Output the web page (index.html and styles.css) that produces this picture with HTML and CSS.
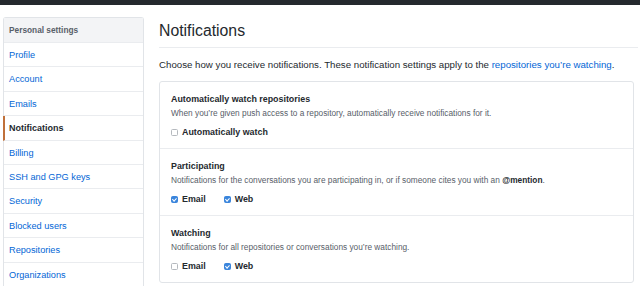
FILE: index.html
```html
<!DOCTYPE html>
<html lang="en">
<head>
<meta charset="UTF-8">
<title>Notification settings</title>
<link rel="stylesheet" href="styles.css">
</head>
<body>
<div class="topbar"></div>

<div class="layout">

  <nav class="menu">
    <div class="menu-heading">Personal settings</div>
    <a class="menu-item" href="#">Profile</a>
    <a class="menu-item" href="#">Account</a>
    <a class="menu-item" href="#">Emails</a>
    <a class="menu-item selected" href="#">Notifications</a>
    <a class="menu-item" href="#">Billing</a>
    <a class="menu-item" href="#">SSH and GPG keys</a>
    <a class="menu-item" href="#">Security</a>
    <a class="menu-item" href="#">Blocked users</a>
    <a class="menu-item" href="#">Repositories</a>
    <a class="menu-item" href="#">Organizations</a>
  </nav>

  <main class="content">
    <h2 class="subhead">Notifications</h2>
    <p class="lead">Choose how you receive notifications. These notification settings apply to the <a href="#">repositories you’re watching</a>.</p>

    <div class="box">
      <div class="box-row">
        <h3>Automatically watch repositories</h3>
        <p class="note">When you’re given push access to a repository, automatically receive notifications for it.</p>
        <div class="checks">
          <label class="check"><span class="box-check"></span>Automatically watch</label>
        </div>
      </div>

      <div class="box-row">
        <h3>Participating</h3>
        <p class="note">Notifications for the conversations you are participating in, or if someone cites you with an <strong>@mention</strong>.</p>
        <div class="checks">
          <label class="check"><span class="box-check on"></span>Email</label>
          <label class="check"><span class="box-check on"></span>Web</label>
        </div>
      </div>

      <div class="box-row">
        <h3>Watching</h3>
        <p class="note">Notifications for all repositories or conversations you’re watching.</p>
        <div class="checks">
          <label class="check"><span class="box-check"></span>Email</label>
          <label class="check"><span class="box-check on"></span>Web</label>
        </div>
      </div>
    </div>
  </main>

</div>
</body>
</html>
```

FILE: styles.css
```css
:root {
  --dark: #24292e;
  --border: #e1e4e8;
  --border-soft: #eaecef;
  --link: #0366d6;
  --text: #24292e;
  --muted: #586069;
  --head-bg: #f3f4f6;
  --accent: #c0703a;
  --check: #3a85dc;
}

* { margin: 0; padding: 0; box-sizing: border-box; }

body {
  background: #fff;
  color: var(--text);
  font-family: 'Liberation Sans', Arial, sans-serif;
  font-size: 9.5px;
  overflow: hidden;
}

a { color: var(--link); text-decoration: none; }

.topbar {
  height: 5px;
  background: var(--dark);
}

.layout {
  display: flex;
  align-items: flex-start;
  padding: 12px 0 0 3px;
}

/* Sidebar */
.menu {
  width: 141px;
  flex-shrink: 0;
  border: 1px solid var(--border);
  border-bottom: 0;
  border-radius: 3px 3px 0 0;
}

.menu-heading {
  height: 25px;
  line-height: 24px;
  padding: 0 5px;
  background: var(--head-bg);
  border-bottom: 1px solid var(--border-soft);
  color: var(--muted);
  font-size: 8.3px;
  font-weight: bold;
}

.menu-item {
  display: block;
  height: 24.4px;
  line-height: 24px;
  padding: 0 5px;
  border-bottom: 1px solid var(--border-soft);
  font-size: 9.2px;
}

.menu-item.selected {
  color: var(--text);
  font-weight: bold;
  font-size: 9px;
  margin-left: -1px;
  border-left: 2px solid var(--accent);
  padding-left: 4px;
}

/* Main */
.content {
  flex: 1;
  margin-left: 15px;
  margin-right: 2px;
}

.subhead {
  font-size: 15.8px;
  font-weight: normal;
  line-height: 26px;
  padding-top: 1px;
  padding-bottom: 3px;
  border-bottom: 1px solid var(--border-soft);
}

.lead {
  font-size: 9.7px;
  line-height: 14px;
  margin: 10px 0 9px;
}

.box {
  border: 1px solid var(--border);
  border-radius: 3px;
  margin-right: 4px;
}

.box-row {
  padding: 10px 11px 9px;
  border-top: 1px solid var(--border-soft);
}
.box-row:first-child { border-top: 0; }

.box-row h3 {
  font-size: 8.9px;
  font-weight: bold;
  line-height: 14px;
}

.note {
  font-size: 8.3px;
  color: var(--muted);
  line-height: 12px;
  margin-top: 1px;
}

.note strong { color: var(--text); }

.checks {
  display: flex;
  gap: 18px;
  margin-top: 6px;
}

.check {
  display: flex;
  align-items: center;
  gap: 4px;
  font-size: 8.9px;
  font-weight: bold;
  line-height: 14px;
}

.box-check {
  width: 7px;
  height: 7px;
  border: 1px solid #b5b9be;
  border-radius: 1.5px;
  background: #fff;
  position: relative;
}

.box-check.on {
  background: var(--check);
  border-color: var(--check);
}
.box-check.on::after {
  content: '';
  position: absolute;
  left: 1.3px;
  top: 0;
  width: 1.5px;
  height: 3px;
  border: solid #fff;
  border-width: 0 1px 1px 0;
  transform: rotate(45deg);
}
```
